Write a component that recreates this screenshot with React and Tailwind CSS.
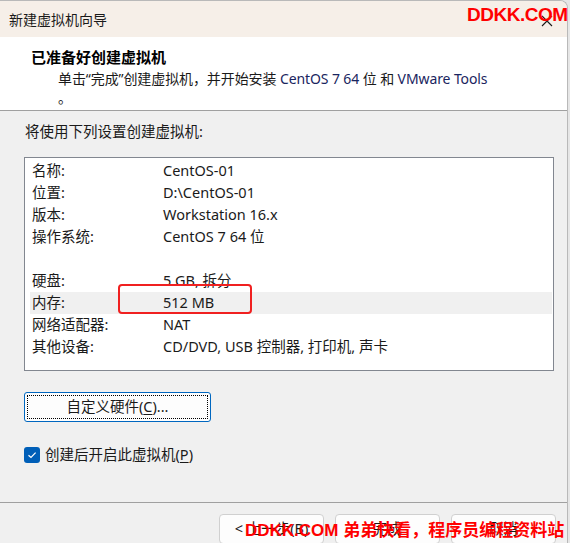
const font = {
  fontFamily: '"Noto Sans", "Noto Sans CJK SC", sans-serif',
};

const rows = [
  { label: "名称:", value: "CentOS-01" },
  { label: "位置:", value: "D:\\CentOS-01" },
  { label: "版本:", value: "Workstation 16.x" },
  { label: "操作系统:", value: "CentOS 7 64 位" },
  { label: "", value: "" },
  { label: "硬盘:", value: "5 GB, 拆分" },
  { label: "内存:", value: "512 MB", selected: true },
  { label: "网络适配器:", value: "NAT" },
  { label: "其他设备:", value: "CD/DVD, USB 控制器, 打印机, 声卡" },
];

function Navy({ children }) {
  return <span className="text-[#1a2560]">{children}</span>;
}

export default function App() {
  return (
    <div
      className="relative h-[543px] w-[570px] overflow-hidden bg-[#e6e6e6] text-[14px] text-[#1a1a1a]"
      style={font}
    >
      <div className="flex h-full w-[568px] flex-col overflow-hidden rounded-tr-[8px] border-r border-t border-[#b9b9b9] bg-[#f0f0f0]">
        {/* title bar */}
        <div className="flex h-[36px] shrink-0 items-center justify-between bg-[#f6efe8] pl-[9px] pr-[14px]">
          <span className="text-[14px] text-[#1a1a1a]">新建虚拟机向导</span>
          <svg width="12" height="12" viewBox="0 0 12 12" className="mt-[3px]">
            <path d="M1 1 L11 11 M11 1 L1 11" stroke="#1a1a1a" strokeWidth="1.1" />
          </svg>
        </div>

        {/* header */}
        <div className="h-[74px] shrink-0 border-b border-[#a0a0a0] bg-white pl-[31px] pt-[9px]">
          <div className="text-[15px] font-bold leading-[22px] text-black">已准备好创建虚拟机</div>
          <div className="pl-[27px] text-[14px] leading-[21px] tracking-[-0.1px]">
            单击“完成”创建虚拟机，并开始安装 <Navy>CentOS 7 64</Navy> 位 和 <Navy>VMware Tools</Navy>
          </div>
          <div className="pl-[27px] text-[14px] leading-[18px]">。</div>
        </div>

        {/* body */}
        <div className="flex flex-1 flex-col pl-[24px] pr-[13px]">
          <div className="mt-[9px] pl-[1px] text-[14.5px] leading-[22px]">将使用下列设置创建虚拟机:</div>

          <div className="mt-[15px] h-[214px] border border-[#828790] bg-white pb-[12px] pl-[5px] pr-px pt-[2px]">
            {rows.map((row, i) => (
              <div
                key={i}
                className={
                  "flex h-[22px] items-center text-[14.5px] " +
                  (row.selected ? "bg-[#f0f0f0]" : "")
                }
              >
                <span className="w-[133px] shrink-0 pl-[2px]">{row.label}</span>
                <span>{row.value}</span>
              </div>
            ))}
          </div>

          <button className="mt-[21px] flex h-[30px] w-[187px] items-center justify-center rounded-[3px] border border-[#0067c0] bg-[#fdfdfd] p-[2px]">
            <span className="flex h-full w-full items-center justify-center border border-dotted border-black text-[14.5px]">
              自定义硬件(<span className="underline underline-offset-2">C</span>)...
            </span>
          </button>

          <label className="mt-[22px] flex items-center gap-[5px]">
            <span className="flex h-[16px] w-[16px] items-center justify-center rounded-[3px] bg-[#005fb8]">
              <svg width="10" height="10" viewBox="0 0 10 10">
                <path d="M1.5 5.2 L4 7.5 L8.6 2.6" fill="none" stroke="white" strokeWidth="1.2" />
              </svg>
            </span>
            <span className="text-[14.5px]">
              创建后开启此虚拟机(<span className="underline underline-offset-2">P</span>)
            </span>
          </label>
        </div>

        {/* footer */}
        <div className="h-[41px] shrink-0 border-t border-[#a0a0a0] pr-[11px] pt-[11px]">
          <div className="flex justify-end gap-[11px]">
            {["< 上一步(B)", "完成", "取消"].map((t) => (
              <button
                key={t}
                className="h-[30px] w-[105px] rounded-[4px] border border-[#d0d0d0] bg-[#fdfdfd] text-[14.5px]"
              >
                {t}
              </button>
            ))}
          </div>
        </div>
      </div>

      {/* annotation box */}
      <div className="absolute left-[118px] top-[284px] h-[30px] w-[134px] rounded-[4px] border-2 border-[#f02020]" />

      {/* watermarks */}
      <div
        className="absolute left-[467px] top-[1px] text-[19px] font-bold tracking-[-0.5px] text-[#ff0000]"
        style={{ fontFamily: '"Liberation Sans", sans-serif' }}
      >
        DDKK.COM
      </div>
      <div
        className="absolute left-[245px] top-[519px] whitespace-nowrap text-[17px] font-bold leading-[24px] text-[#ff0000]"
        style={{ fontFamily: '"Liberation Sans", "Noto Sans CJK SC", sans-serif' }}
      >
        DDKK.COM 弟弟快看，程序员编程资料站
      </div>
    </div>
  );
}
